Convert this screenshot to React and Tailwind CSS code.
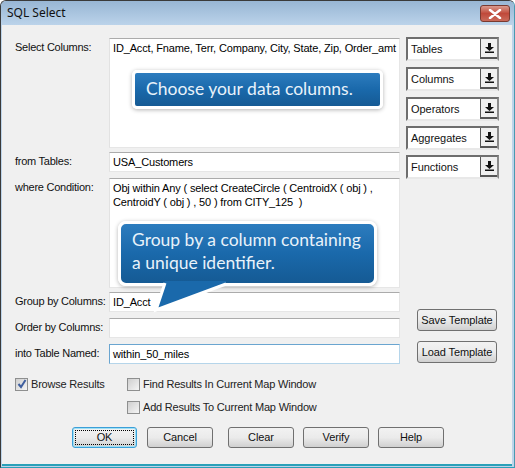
function Input({ children, className = "", focus }) {
  return (
    <div className={`bg-white border ${focus ? "border-[#b5d5ea] border-t-[#6aa5d0] border-l-[#6aa5d0]" : "border-[#e6e6e6] border-t-[#ababab] border-l-[#e2e2e2]"} pl-[3px] text-[11px] tracking-[-0.15px] leading-[14px] text-black whitespace-pre-wrap overflow-hidden ${className}`}>
      {children}
    </div>
  );
}
function Row({ label, children, className = "" }) {
  return (
    <div className={`flex ${className}`}>
      <div className="w-[94px] ml-[1px] shrink-0 text-[11px] tracking-[-0.25px] leading-[14px] pt-[2px] text-[#111] whitespace-nowrap">{label}</div>
      <div className="w-[291px]">{children}</div>
    </div>
  );
}
function Combo({ label, className = "" }) {
  return (
    <div className={`h-[24px] w-[93px] flex border-2 border-[#6e6e6e] border-r-[#8a8a8a] border-b-[#e8e8e8] bg-white ${className}`}>
      <div className="flex-1 pl-[3px] text-[11px] tracking-[-0.05px] leading-[21px] text-[#111]">{label}</div>
      <div className="w-[17px] bg-[#efefef] border-l border-[#555] border-b-2 border-b-[#555] flex items-center justify-center">
        <svg width="9" height="10" viewBox="0 0 9 10"><path d="M3 0h3v4h3L4.500 8 0 4h3zM0 8.500h9v1.500H0z" fill="#111" /></svg>
      </div>
    </div>
  );
}
function Btn({ children, w, focus, className = "" }) {
  return (
    <div className={`h-[21px] ${w} rounded-[3px] border ${focus ? "border-[#3c9fd8] shadow-[inset_0_0_0_1px_#9ee0f5]" : "border-[#707070]"} bg-gradient-to-b from-[#f2f2f2] via-[#ebebeb] to-[#d0d0d0] flex items-center justify-center text-[11px] tracking-[-0.1px] text-[#111] relative whitespace-nowrap ${className}`}>
      {focus && <div className="absolute inset-[2px] border border-dotted border-black" />}
      {children}
    </div>
  );
}
function Check({ label, checked, className = "" }) {
  return (
    <div className={`flex items-center gap-[3px] text-[11px] tracking-[-0.2px] leading-[14px] text-[#222] whitespace-nowrap ${className}`}>
      <div className="w-[13px] h-[13px] border border-[#8e8f8f] bg-gradient-to-br from-[#cfcfcf] to-[#f5f5f5] flex items-center justify-center">
        {checked && <svg width="10" height="10" viewBox="0 0 10 10"><path d="M1.500 5l2.500 3 4.500-7" fill="none" stroke="#3f5f9f" strokeWidth="2" /></svg>}
      </div>
      {label}
    </div>
  );
}
const calloutFont = { fontFamily: "Lato, sans-serif" };
export default function App() {
  return (
    <div className="w-[515px] h-[468px] relative overflow-hidden rounded-t-[6px] bg-[#bdd4ea] border border-[#3a3a3a] border-b-[#2aa0b8] border-r-[#4a9ab0] flex flex-col" style={{ fontFamily: "'Liberation Sans', sans-serif" }}>
      <div className="h-[24px] shrink-0 bg-gradient-to-b from-[#98b6d4] to-[#bbd3ea] flex items-center justify-between pl-[6px] pr-[4px] relative">
        <span className="text-[12px] text-[#111]" style={{ fontFamily: "'Noto Sans', sans-serif" }}>SQL Select</span>
        <div className="w-[30px] h-[17px] mt-[1px] rounded-[3px] border border-[#7a3a30] bg-gradient-to-b from-[#d99a8e] via-[#c0493a] to-[#c96a5a] flex items-center justify-center">
          <svg width="14" height="10" viewBox="0 0 14 10"><path d="M2 1l10 8M12 1L2 9" stroke="#fff" strokeWidth="2.500" strokeLinecap="round" /></svg>
        </div>
      </div>
      <div className="ml-[1px] mr-[2px] mb-[1px] flex-1 bg-[#f0f0f0] border-b-2 border-[#2aa0b8] pl-[12px] pt-[13px] relative">
        <div className="flex">
          <div className="flex flex-col w-[386px]">
            <Row label="Select Columns:"><Input className="h-[110px] pt-[2px] whitespace-nowrap">ID_Acct, Fname, Terr, Company, City, State, Zip, Order_amt</Input></Row>
            <Row label="from Tables:" className="mt-[4px]"><Input className="h-[20px] pt-[2px]">USA_Customers</Input></Row>
            <Row label="where Condition:" className="mt-[6px]"><Input className="h-[110px] pt-[2px]">{"Obj within Any ( select CreateCircle ( CentroidX ( obj ) ,\nCentroidY ( obj ) , 50 ) from CITY_125  )"}</Input></Row>
            <Row label="Group by Columns:" className="mt-[4px]"><Input className="h-[20px] pt-[2px]">ID_Acct</Input></Row>
            <Row label="Order by Columns:" className="mt-[6px]"><Input className="h-[20px]" /></Row>
            <Row label="into Table Named:" className="mt-[6px]"><Input focus className="h-[20px] pt-[2px]">within_50_miles</Input></Row>
          </div>
          <div className="ml-[6px] flex flex-col">
            <div className="flex flex-col gap-[5px] -mt-[1px]">
              <Combo label="Tables" />
              <Combo label="Columns" className="mt-[1px]" />
              <Combo label="Operators" className="mt-[1px]" />
              <Combo label="Aggregates" />
              <Combo label="Functions" />
            </div>
            <div className="flex flex-col gap-[10px] mt-[130px] ml-[11px]">
              <Btn w="w-[80px]" className="h-[22px]">Save Template</Btn>
              <Btn w="w-[80px]" className="h-[22px]">Load Template</Btn>
            </div>
          </div>
        </div>
        <div className="flex mt-[13px] ml-[1px]">
          <Check label="Browse Results" checked className="w-[112px] h-[14px]" />
          <div className="flex flex-col gap-[9px]">
            <Check label="Find Results In Current Map Window" />
            <Check label="Add Results To Current Map Window" />
          </div>
        </div>
        <div className="flex mt-[13px] ml-[58px]">
          <Btn w="w-[65px]" focus>OK</Btn>
          <Btn w="w-[66px]" className="ml-[10px]">Cancel</Btn>
          <Btn w="w-[66px]" className="ml-[15px]">Clear</Btn>
          <Btn w="w-[66px]" className="ml-[9px]">Verify</Btn>
          <Btn w="w-[66px]" className="ml-[9px]">Help</Btn>
        </div>
        <div className="absolute left-[130px] top-[45px] w-[251px] h-[39px] rounded-[5px] border-[3px] border-white bg-gradient-to-b from-[#2c7cbe] via-[#1a69ab] to-[#155a94] shadow-[0_1px_4px_rgba(0,0,0,0.3)] pl-[11px] text-[17.500px] leading-[31px] text-[#e8f2fa]" style={calloutFont}>Choose your data columns.</div>
        <div className="absolute left-[116px] top-[196px] w-[259px] h-[65px] rounded-[8px] border-[3px] border-white bg-gradient-to-b from-[#2c7cbe] via-[#1a69ab] to-[#155a94] shadow-[0_1px_4px_rgba(0,0,0,0.3)] pl-[11px] pt-[4px] text-[17.500px] leading-[23px] text-[#e8f2fa]" style={calloutFont}>
          Group by a column containing<br />a unique identifier.
        </div>
        <svg className="absolute left-[148px] top-[256px]" width="80" height="36" viewBox="0 0 80 36">
          <path d="M15 0L6 29L76 2V0z" fill="#1a69ab" />
          <path d="M15 2L6 29L76 3" fill="none" stroke="#fff" strokeWidth="3" />
        </svg>
      </div>
    </div>
  );
}
